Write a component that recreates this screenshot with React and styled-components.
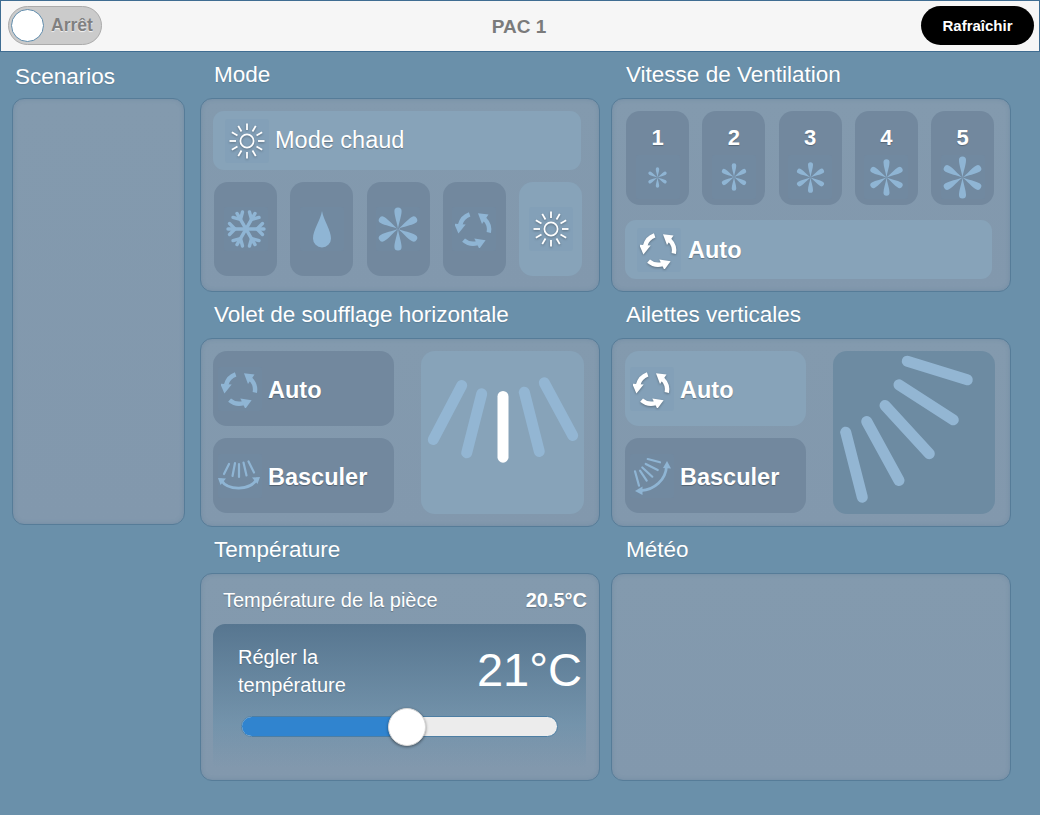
import React from 'react';
import styled, { createGlobalStyle } from 'styled-components';

const GlobalStyle = createGlobalStyle`
  html, body {
    margin: 0;
    padding: 0;
    background: #6a90aa;
    font-family: "Liberation Sans", Arial, sans-serif;
  }
  * { box-sizing: border-box; }
`;

const Page = styled.div`
  width: 1040px;
  height: 815px;
  overflow: hidden;
  background: #6a90aa;
  color: #fff;
`;

const Header = styled.header`
  height: 52px;
  display: grid;
  grid-template-columns: 1fr auto 1fr;
  align-items: center;
  padding: 0 5px 1px 7px;
  background: #f6f6f6;
  border: 1px solid #3f6d92;
`;

const Toggle = styled.div`
  width: 94px;
  height: 39px;
  display: flex;
  align-items: center;
  gap: 7px;
  padding-left: 2px;
  background: #cbcbcb;
  border: 1px solid #ababab;
  border-radius: 20px;
`;

const ToggleKnob = styled.span`
  width: 33px;
  height: 33px;
  border-radius: 50%;
  background: #fff;
  border: 1px solid #5f8bab;
`;

const ToggleLabel = styled.span`
  font-size: 17.5px;
  font-weight: 700;
  color: #808080;
  text-shadow: 0 1px 1px rgba(255, 255, 255, 0.8);
`;

const HeaderTitle = styled.h1`
  margin: 2px 4px 0 0;
  font-size: 19px;
  font-weight: 700;
  color: #7b7b7b;
`;

const RefreshButton = styled.button`
  justify-self: end;
  width: 113px;
  height: 39px;
  border: 0;
  border-radius: 20px;
  background: #000;
  color: #fff;
  font-family: inherit;
  font-size: 15px;
  font-weight: 700;
`;

const Body = styled.main`
  display: flex;
  gap: 15px;
  padding-left: 12px;
`;

const SideColumn = styled.aside`
  width: 173px;
  display: flex;
  flex-direction: column;
  align-items: stretch;
`;

const SideTitle = styled.h2`
  height: 46px;
  margin: 0;
  padding: 4px 0 0 3px;
  display: flex;
  align-items: center;
  font-size: 22.5px;
  font-weight: 400;
  text-shadow: 0 1px 1px rgba(0, 0, 0, 0.12);
`;

const Sections = styled.div`
  display: grid;
  grid-template-columns: 400px 400px;
  grid-template-rows: 240px 235px 254px;
  column-gap: 11px;
`;

const Section = styled.section`
  display: flex;
  flex-direction: column;
  min-width: 0;
`;

const SectionTitle = styled.h2`
  height: 46px;
  flex: none;
  margin: 0;
  padding: 0 0 ${p => p.$lift || 0}px ${p => p.$inset || 14}px;
  display: flex;
  align-items: center;
  font-size: 22.5px;
  font-weight: 400;
  text-shadow: 0 1px 1px rgba(0, 0, 0, 0.12);
`;

const Panel = styled.div`
  flex: ${p => (p.$height ? 'none' : 1)};
  height: ${p => (p.$height ? `${p.$height}px` : 'auto')};
  background: linear-gradient(180deg, #839aae, #8298ad);
  border: 1px solid #567c98;
  border-radius: 12px;
  box-shadow: inset 0 0 4px rgba(90, 125, 150, 0.45);
`;

const StackPanel = styled(Panel)`
  display: flex;
  flex-direction: column;
  padding: 12px 0 0 ${p => p.$left}px;
`;

const ControlPanel = styled(Panel)`
  display: flex;
  gap: 27px;
  padding: 12px 15px 12px ${p => p.$left}px;
`;

const WideBar = styled.div`
  width: ${p => p.$width}px;
  height: 59px;
  margin-top: ${p => p.$top || 0}px;
  display: flex;
  align-items: center;
  gap: ${p => p.$gap}px;
  padding-left: 12px;
  background: #87a3b9;
  border-radius: 11px;
`;

const BarText = styled.span`
  padding-top: ${p => p.$drop || 0}px;
  font-size: 23.5px;
  font-weight: ${p => (p.$bold ? 700 : 400)};
  text-shadow: 0 1px 1px rgba(0, 0, 0, 0.3);
`;

const ButtonRow = styled.div`
  width: 368px;
  margin: ${p => p.$top}px 0 0 1px;
  display: flex;
  justify-content: space-between;
`;

const ModeButton = styled.div`
  width: 63px;
  height: 94px;
  display: flex;
  align-items: center;
  justify-content: center;
  background: ${p => (p.$active ? '#87a3b9' : '#72889e')};
  border-radius: 14px;
`;

const FanButton = styled.div`
  width: 63px;
  height: 94px;
  display: flex;
  flex-direction: column;
  align-items: center;
  gap: 4px;
  padding-top: 14px;
  background: #72889e;
  border-radius: 14px;
`;

const FanDigit = styled.span`
  height: 26px;
  line-height: 26px;
  font-size: 22px;
  font-weight: 700;
  text-shadow: 0 1px 1px rgba(0, 0, 0, 0.25);
`;

const IconBox = styled.span`
  width: 44px;
  height: 44px;
  flex: none;
  display: flex;
  align-items: center;
  justify-content: center;
  background: rgba(106, 146, 175, 0.13);
  border-radius: 3px;
`;

const ButtonColumn = styled.div`
  width: 181px;
  flex: none;
  display: flex;
  flex-direction: column;
  gap: 12px;
`;

const SwitchButton = styled.div`
  height: 75px;
  display: flex;
  align-items: center;
  gap: 6px;
  padding-left: 5px;
  background: ${p => (p.$active ? '#87a3b9' : '#72889e')};
  border-radius: 14px;
`;

const VaneBox = styled.div`
  flex: 1;
  background: ${p => (p.$light ? '#87a3b9' : '#6d8ba2')};
  border-radius: 14px;
`;

const VaneDrawing = styled.svg`
  display: block;
  width: 100%;
  height: 100%;
`;

const TemperaturePanel = styled(Panel)`
  padding: 0 13px 0 12px;
`;

const RoomRow = styled.div`
  height: 50px;
  display: flex;
  align-items: center;
  justify-content: space-between;
  padding: 2px 0 0 10px;
  font-size: 20px;
  text-shadow: 0 1px 1px rgba(0, 0, 0, 0.25);
`;

const RoomValue = styled.strong`
  margin-right: -1px;
  font-weight: 700;
`;

const SetBox = styled.div`
  height: 144px;
  padding: 16px 4px 0 25px;
  background: linear-gradient(180deg, #577690 0%, rgba(106, 144, 170, 0.6) 70%, rgba(130, 152, 173, 0) 100%);
  border-radius: 12px 12px 0 0;
`;

const SetTop = styled.div`
  display: flex;
  justify-content: space-between;
  align-items: flex-start;
`;

const SetLabel = styled.div`
  width: 130px;
  padding-top: 3px;
  font-size: 20px;
  line-height: 28px;
  text-shadow: 0 1px 1px rgba(0, 0, 0, 0.15);
`;

const SetValue = styled.div`
  font-size: 47px;
  line-height: 60px;
`;

const Slider = styled.div`
  position: relative;
  width: 317px;
  height: 21px;
  margin: 16px 0 0 3px;
  background: #ececec;
  border: 1px solid #4d7ea3;
  border-radius: 11px;
`;

const SliderFill = styled.div`
  height: 100%;
  background: #3084cf;
  border-radius: 10px 0 0 10px;
`;

const SliderThumb = styled.span`
  position: absolute;
  top: 50%;
  width: 38px;
  height: 38px;
  border-radius: 50%;
  background: #fff;
  border: 1px solid #d8d8d8;
  box-shadow: 0 1px 3px rgba(0, 0, 0, 0.45);
  transform: translate(-50%, -50%);
`;

const WHITE = '#ffffff';
const BLUE = '#8fb5d4';

const softShadow = { filter: 'drop-shadow(0 1px 1px rgba(0,0,0,0.3))' };

const SunIcon = ({ color = WHITE }) => (
  <svg width="38" height="38" viewBox="-19 -19 38 38" style={softShadow}>
    <circle r="6.6" fill="none" stroke={color} strokeWidth="1.7" />
    {[0, 30, 60, 90, 120, 150, 180, 210, 240, 270, 300, 330].map(a => (
      <line key={a} y1="-11" y2="-17.5" stroke={color} strokeWidth="1.8" transform={`rotate(${a})`} />
    ))}
  </svg>
);

const SnowIcon = ({ color = BLUE }) => (
  <svg width="42" height="42" viewBox="-21 -21 42 42">
    {[0, 60, 120].map(a => (
      <g key={a} transform={`rotate(${a + 30})`} stroke={color} strokeWidth="3.4" strokeLinecap="round" fill="none">
        <line y1="-18" y2="18" />
        <path d="M-5.5 -16.5 L0 -11 L5.5 -16.5" />
        <path d="M-5.5 16.5 L0 11 L5.5 16.5" />
      </g>
    ))}
  </svg>
);

const DropIcon = ({ color = BLUE }) => (
  <svg width="20" height="38" viewBox="0 0 20 38">
    <path d="M10 1 C11.5 10 19 20 19 28.500 A9 9 0 0 1 1 28.500 C1 20 8.500 10 10 1Z" fill={color} />
  </svg>
);

const FanIcon = ({ size = 44, color = BLUE }) => (
  <svg width={size} height={size} viewBox="-22 -22 44 44">
    {[0, 60, 120, 180, 240, 300].map(a => (
      <path
        key={a}
        d="M0 0 C-0.800 -6 -3.600 -13 -3.600 -18 A3.600 3.600 0 0 1 3.600 -18 C3.600 -13 0.800 -6 0 0Z"
        fill={color}
        transform={`rotate(${a})`}
      />
    ))}
  </svg>
);

const AutoIcon = ({ color = BLUE }) => (
  <svg width="38" height="38" viewBox="-19 -19 38 38" style={color === WHITE ? softShadow : undefined}>
    {[0, 120, 240].map(a => (
      <g key={a} transform={`rotate(${a})`} fill={color}>
        <path d="M14.800 3.500 A15 15 0 0 0 10.500 -10" fill="none" stroke={color} strokeWidth="4.400" />
        <polygon points="4,-15.700 14.500,-14.500 8,-5" />
      </g>
    ))}
  </svg>
);

const SwingHorizontalIcon = ({ color = BLUE }) => (
  <svg width="44" height="44" viewBox="0 0 44 44">
    <g stroke={color} strokeWidth="2.200" fill="none" strokeLinecap="round">
      <line x1="11" y1="10" x2="6" y2="20" />
      <line x1="17" y1="9" x2="14.500" y2="22" />
      <line x1="21" y1="10" x2="21" y2="23" />
      <line x1="25.500" y1="8.500" x2="28.500" y2="21.500" />
      <line x1="30.500" y1="7.500" x2="36" y2="18.500" />
      <path d="M3 26 C10 37 32 37 39 25" strokeWidth="2.800" />
    </g>
    <polygon points="0,24 8,24.500 2.500,31" fill={color} />
    <polygon points="42,23 34,23.500 39.500,30" fill={color} />
  </svg>
);

const SwingVerticalIcon = ({ color = BLUE }) => (
  <svg width="44" height="44" viewBox="0 0 44 44">
    <g stroke={color} strokeWidth="2.200" fill="none" strokeLinecap="round">
      <line x1="17.700" y1="5" x2="30" y2="8.300" />
      <line x1="15.700" y1="10" x2="27.700" y2="16" />
      <line x1="12.300" y1="13.500" x2="22.300" y2="22.700" />
      <line x1="10" y1="16.700" x2="16.700" y2="26.700" />
      <line x1="5" y1="17.300" x2="9" y2="31.700" />
      <path d="M36.500 12 C36 26 24 36 11 36.700" strokeWidth="2.800" />
    </g>
    <polygon points="37,7 41,14.500 33,14" fill={color} />
    <polygon points="5,37 12.500,32.500 12.500,41" fill={color} />
  </svg>
);

const VaneBars = ({ bars, active, viewWidth = 163 }) => (
  <VaneDrawing viewBox={`0 0 ${viewWidth} 162`}>
    {bars.map((b, i) => (
      <line
        key={i}
        x1={b[0]}
        y1={b[1]}
        x2={b[2]}
        y2={b[3]}
        stroke={i === active ? WHITE : '#93b6d3'}
        strokeWidth="11"
        strokeLinecap="round"
      />
    ))}
  </VaneDrawing>
);

const horizontalBars = [
  [40.7, 34, 12.3, 88],
  [60.7, 42.3, 45.7, 101.3],
  [82, 45, 82, 105.7],
  [103.3, 40.7, 118.3, 100],
  [123.3, 31.3, 151.7, 84],
];

const verticalBars = [
  [12.7, 80.7, 29.3, 145.7],
  [33.7, 70, 66, 129],
  [52, 54, 96.3, 102.3],
  [66, 33.3, 120.3, 68.3],
  [74.3, 9.7, 134.3, 28.3],
];

const fanSpeeds = [
  { n: 1, size: 21 },
  { n: 2, size: 28 },
  { n: 3, size: 31 },
  { n: 4, size: 37 },
  { n: 5, size: 43 },
];

const setPoint = 21;
const sliderPercent = ((setPoint - 10) / 21) * 100;

export default function App() {
  return (
    <Page>
      <GlobalStyle />
      <Header>
        <Toggle>
          <ToggleKnob />
          <ToggleLabel>Arrêt</ToggleLabel>
        </Toggle>
        <HeaderTitle>PAC 1</HeaderTitle>
        <RefreshButton>Rafraîchir</RefreshButton>
      </Header>
      <Body>
        <SideColumn>
          <SideTitle>Scenarios</SideTitle>
          <Panel $height={427} />
        </SideColumn>
        <Sections>
          <Section>
            <SectionTitle>Mode</SectionTitle>
            <StackPanel $left={12}>
              <WideBar $width={368} $gap={6}>
                <IconBox><SunIcon /></IconBox>
                <BarText>Mode chaud</BarText>
              </WideBar>
              <ButtonRow $top={12}>
                <ModeButton><IconBox><SnowIcon /></IconBox></ModeButton>
                <ModeButton><IconBox><DropIcon /></IconBox></ModeButton>
                <ModeButton><IconBox><FanIcon /></IconBox></ModeButton>
                <ModeButton><IconBox><AutoIcon /></IconBox></ModeButton>
                <ModeButton $active><IconBox><SunIcon /></IconBox></ModeButton>
              </ButtonRow>
            </StackPanel>
          </Section>
          <Section>
            <SectionTitle $inset={15}>Vitesse de Ventilation</SectionTitle>
            <StackPanel $left={13}>
              <ButtonRow $top={0}>
                {fanSpeeds.map(s => (
                  <FanButton key={s.n}>
                    <FanDigit>{s.n}</FanDigit>
                    <IconBox><FanIcon size={s.size} /></IconBox>
                  </FanButton>
                ))}
              </ButtonRow>
              <WideBar $width={367} $gap={7} $top={15}>
                <IconBox><AutoIcon color={WHITE} /></IconBox>
                <BarText $bold $drop={2}>Auto</BarText>
              </WideBar>
            </StackPanel>
          </Section>
          <Section>
            <SectionTitle $lift={1}>Volet de soufflage horizontale</SectionTitle>
            <ControlPanel $left={12}>
              <ButtonColumn>
                <SwitchButton>
                  <IconBox><AutoIcon /></IconBox>
                  <BarText $bold $drop={4}>Auto</BarText>
                </SwitchButton>
                <SwitchButton>
                  <IconBox><SwingHorizontalIcon /></IconBox>
                  <BarText $bold $drop={4}>Basculer</BarText>
                </SwitchButton>
              </ButtonColumn>
              <VaneBox $light>
                <VaneBars bars={horizontalBars} active={2} />
              </VaneBox>
            </ControlPanel>
          </Section>
          <Section>
            <SectionTitle $lift={1} $inset={15}>Ailettes verticales</SectionTitle>
            <ControlPanel $left={13}>
              <ButtonColumn>
                <SwitchButton $active>
                  <IconBox><AutoIcon color={WHITE} /></IconBox>
                  <BarText $bold $drop={4}>Auto</BarText>
                </SwitchButton>
                <SwitchButton>
                  <IconBox><SwingVerticalIcon /></IconBox>
                  <BarText $bold $drop={4}>Basculer</BarText>
                </SwitchButton>
              </ButtonColumn>
              <VaneBox>
                <VaneBars bars={verticalBars} active={-1} viewWidth={162} />
              </VaneBox>
            </ControlPanel>
          </Section>
          <Section>
            <SectionTitle $lift={1}>Température</SectionTitle>
            <TemperaturePanel>
              <RoomRow>
                <span>Température de la pièce</span>
                <RoomValue>20.5°C</RoomValue>
              </RoomRow>
              <SetBox>
                <SetTop>
                  <SetLabel>Régler la température</SetLabel>
                  <SetValue>{setPoint}°C</SetValue>
                </SetTop>
                <Slider>
                  <SliderFill style={{ width: `${sliderPercent}%` }} />
                  <SliderThumb style={{ left: `${sliderPercent}%` }} />
                </Slider>
              </SetBox>
            </TemperaturePanel>
          </Section>
          <Section>
            <SectionTitle $lift={1} $inset={15}>Météo</SectionTitle>
            <Panel />
          </Section>
        </Sections>
      </Body>
    </Page>
  );
}
